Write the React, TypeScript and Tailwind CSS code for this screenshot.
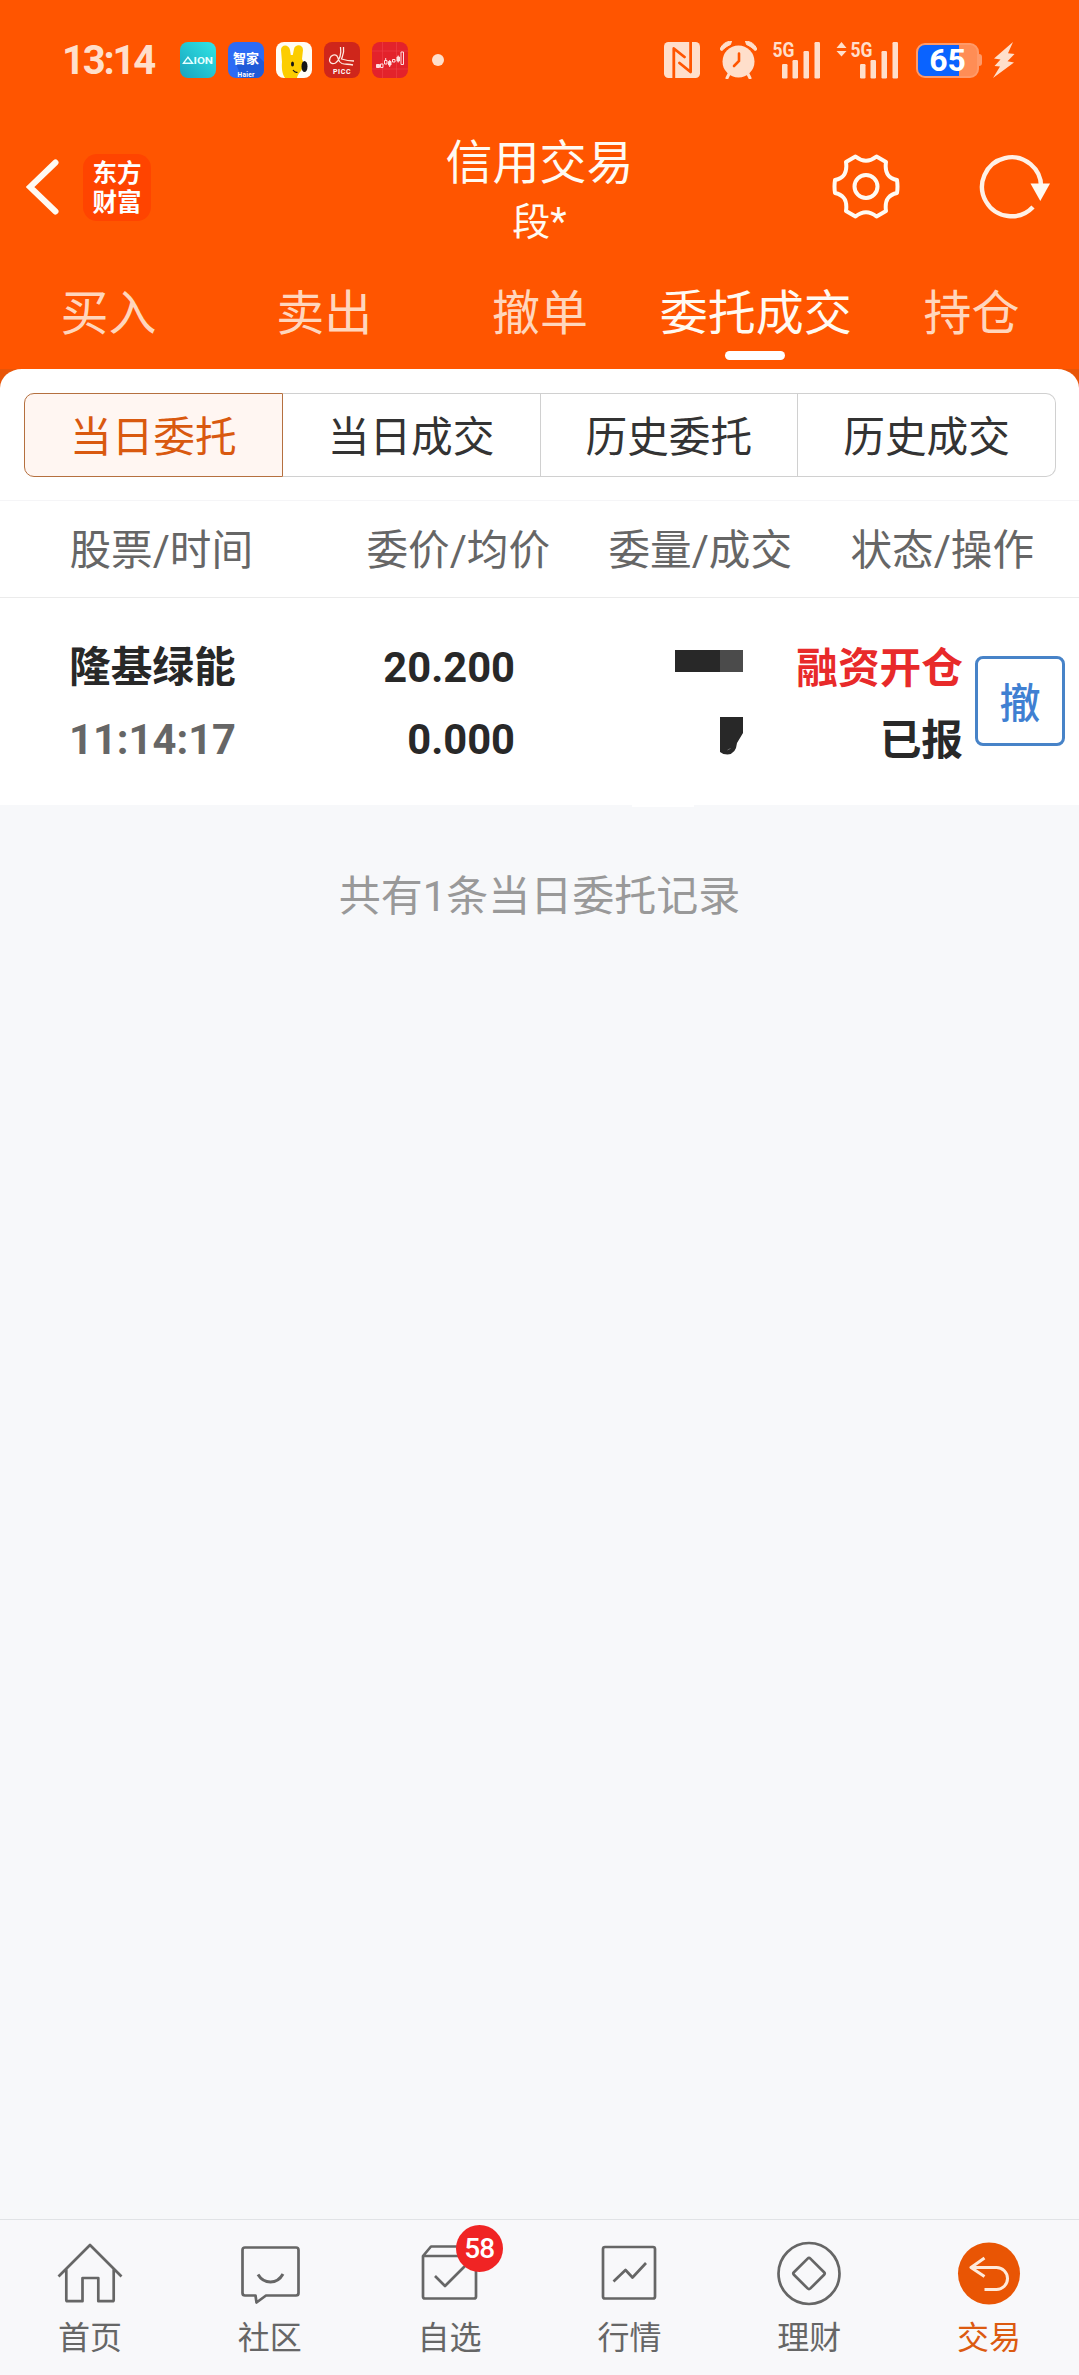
import type { ReactNode } from "react";
import clsx from "clsx";

const tabs = ["买入", "卖出", "撤单", "委托成交", "持仓"];
const segments = ["当日委托", "当日成交", "历史委托", "历史成交"];

// ─── Status bar ──────────────────────────────────────────────────────────────

function AppIcons() {
  return (
    <div className="flex gap-3">
      <svg className="size-9" viewBox="0 0 36 36">
        <defs>
          <linearGradient id="aion" x1="1" y1="0" x2="0" y2="1">
            <stop offset="0" stopColor="#2fe6e6" />
            <stop offset="1" stopColor="#1ba3bd" />
          </linearGradient>
        </defs>
        <rect width="36" height="36" rx="8" fill="url(#aion)" />
        <path d="M3.5 21.2L8 15.2l4.6 6z" fill="none" stroke="#e6ffff" strokeWidth="1.4" />
        <text x="13.5" y="21.8" fontSize="8.6" fontWeight="700" fill="#e6ffff" textLength="19.5" lengthAdjust="spacingAndGlyphs">ION</text>
      </svg>
      <svg className="size-9" viewBox="0 0 36 36">
        <rect width="36" height="36" rx="8" fill="#2c6bf5" />
        <path d="M30 14l6 6v8a8 8 0 0 1-8 8H14L8 22z" fill="#1f5ad8" />
        <text x="5" y="21" fontSize="13" fontWeight="700" fill="#fff">智家</text>
        <text x="9.5" y="34.8" fontSize="6.6" fontWeight="700" fill="#fff" textLength="17">Haier</text>
      </svg>
      <svg className="size-9" viewBox="0 0 36 36">
        <rect width="36" height="36" rx="8" fill="#fffdf6" />
        <path d="M5 8c0-6 8-6 9 0l.8 5h2L18 7c1-5 9-5 9 1l-1 9c2 4 2 7 0 10-1 3-4 4-5 9H9C6 32 5.500 25 6 20z" fill="#fccd00" />
        <ellipse cx="28.500" cy="24.500" rx="3" ry="5.500" fill="#161616" />
        <ellipse cx="16.500" cy="22" rx="1.500" ry="2.500" fill="#161616" />
        <path d="M17 28q2 3 4.500 2.200" fill="none" stroke="#161616" strokeWidth="1.200" />
      </svg>
      <svg className="size-9" viewBox="0 0 36 36">
        <rect width="36" height="36" rx="8" fill="#cf261b" />
        <g fill="none" stroke="#ffe9e0" strokeWidth="1.300">
          <path d="M16.500 5c1 7-1 13-5 16-4 2-7-1-5.500-5 1-3 5-4 7-2 2 3 1 6 5 7.500 3 1 6 .5 11 1.500" />
          <path d="M19.500 5c1 6-1 9-2 12 3 1 7 2 12.500 2" />
        </g>
        <text x="9" y="31.500" fontSize="7" fontWeight="700" fill="#fff" textLength="17.500">PICC</text>
      </svg>
      <svg className="size-9" viewBox="0 0 36 36">
        <rect width="36" height="36" rx="8" fill="#e3222b" />
        <path d="M10.500 0v36M24.500 0v36M0 9h36M0 27h36" stroke="#ee4148" strokeWidth=".6" />
        <g fill="#ffdfe0" stroke="#ffdfe0" strokeWidth="1">
          <path d="M4.500 22.500h3v3h-3zM16.500 19.500h2.500v3.500h-2.500zM25 15h2.500v4H25z" />
          <path d="M8.500 22h2.500v3.500H8.500zM12.500 18.500h2.500V22h-2.500zM20.500 17.500h2.500V20h-2.500zM29 10h2.500v12.500H29z" fill="none" />
          <path d="M13.700 16v2.500M17.700 18v7M26.200 13.500v7" />
        </g>
      </svg>
    </div>
  );
}

function Signal({ arrows = false }: Readonly<{ arrows?: boolean }>) {
  return (
    <svg className={arrows ? "ml-[15px] h-[46px] w-[63px]" : "ml-[15px] h-[46px] w-[49px]"} viewBox={arrows ? "-14 -4 63 46" : "0 -4 49 46"} fill="#ffdfcb">
      {arrows && <path d="M-13.500 7L-8.500 1l5 6zM-13.500 10L-8.500 15.500l5-5.500z" />}
      <text x="0.500" y="16" fontSize="21" fontWeight="700" textLength="22" lengthAdjust="spacingAndGlyphs">5G</text>
      <rect x="10" y="23" width="5.500" height="14.500" rx="1.200" />
      <rect x="20.500" y="19" width="5.500" height="18.500" rx="1.200" />
      <rect x="31.500" y="10" width="5.500" height="27.500" rx="1.200" />
      <rect x="42.500" y="1" width="5.500" height="36.500" rx="1.200" />
    </svg>
  );
}

function StatusBar() {
  return (
    <div className="flex h-[120px] items-center pl-[62px]">
      <span className="w-[118px] pt-px text-[40px] leading-none font-bold tracking-[-2.2px] text-[#ffdfcb]">13:14</span>
      <AppIcons />
      <span className="ml-6 size-3 rounded-full bg-[#ffdfcb]" />
      <div className="ml-[220px] flex items-center">
        <svg className="h-[38px] w-9" viewBox="0 0 36 38">
          <rect y="1" width="36" height="36" rx="4.500" fill="#ffdfcb" />
          <path d="M9.800 37V7.500L20.500 16M26.600 1v30L15.500 22" fill="none" stroke="#ff5500" strokeWidth="2.800" strokeLinejoin="round" strokeLinecap="round" />
        </svg>
        <svg className="ml-5 h-[38px] w-[37px]" viewBox="0 0 37 38" fill="#ffdfcb">
          <circle cx="18.500" cy="20.500" r="16" />
          <path d="M0 8.500C2 3 6 .5 11.500 0l-1 3.500C7 5 4.500 7 2 9.500zM37 8.500C35 3 31 .5 25.500 0l1 3.500C30 5 32.500 7 35 9.500z" stroke="#ffdfcb" strokeLinejoin="round" />
          <path d="M9.500 32L7 37M27.500 32l2.500 5" stroke="#ffdfcb" strokeWidth="3" strokeLinecap="round" />
          <path d="M19 12.500V20l-5 5" fill="none" stroke="#ff5500" strokeWidth="2.600" strokeLinecap="round" />
        </svg>
        <Signal />
        <Signal arrows />
        <div className="relative ml-[17px] flex h-[35px] w-[63px] items-center justify-center rounded-[9px] border-2 border-[#ff9a69] bg-[#ff8d55]">
          <div className="absolute inset-y-0 left-0 w-[41px] rounded-l-[7px] bg-[#0a63ff]" />
          <span className="relative text-[32px] leading-none font-bold text-white">65</span>
        </div>
        <div className="h-3 w-[3px] rounded-r-sm bg-[#ff9a69]" />
        <svg className="ml-[11px] h-9 w-[22px]" viewBox="0 0 22 36" fill="#ffdfcb">
          <path d="M20 0L1 16.500l6.500 1L1.500 24l5.500.5L0 36l21-15.500-6.500-1.200L21.500 12l-6.500-.8z" />
        </svg>
      </div>
    </div>
  );
}

// ─── Title bar ───────────────────────────────────────────────────────────────

function TitleBar() {
  return (
    <div className="flex h-[150px] items-start text-[#fffaf2]">
      <div className="flex w-[360px] pl-[26px] pt-[34px]">
        <svg className="mt-[5px] h-[56px] w-[34px]" viewBox="0 0 34 56" fill="none" stroke="#fffaf2" strokeWidth="6" strokeLinecap="round">
          <path d="M29.500 3.500L4 28l25.500 24.500" />
        </svg>
        <div className="ml-[23px] flex h-[67px] w-[68px] flex-col items-center justify-center rounded-[14px] bg-[#ff4400] text-[24.5px] leading-[29px] font-bold text-white">
          <span>东方</span>
          <span>财富</span>
        </div>
      </div>
      <div className="flex w-[359px] flex-col items-center pt-[14px]">
        <h1 className="text-[47px] leading-[58px]">信用交易</h1>
        <p className="text-[38px] leading-[60px]">段*</p>
      </div>
      <div className="flex flex-1 pt-[33px] pl-[113px]">
        <svg className="h-[67px] w-[68px]" viewBox="-34 -33.500 68 67" fill="none" stroke="#fffaf2" strokeWidth="4" strokeLinejoin="round">
          <path d="M-10.500 -30Q0 -21.500 10.500 -30L20 -24.500C18.500 -14 22 -8.500 31 -6.500Q32 0 31 6.500C22 8.500 18.500 14 20 24.500L10.500 30Q0 21.500 -10.500 30L-20 24.500C-18.500 14 -22 8.500 -31 6.500Q-32 0 -31 -6.500C-22 -8.500 -18.500 -14 -20 -24.500Z" />
          <circle r="11.500" />
        </svg>
        <svg className="ml-[78px] h-[67px] w-[76px]" viewBox="-34 -33.500 76 67">
          <path d="M29 2A29.500 29.500 0 1 0 21 20.500" fill="none" stroke="#fff1e6" strokeWidth="4.400" />
          <path d="M18.500 -3h19.500l-9.700 17.500z" fill="#fffaf2" />
        </svg>
      </div>
    </div>
  );
}

function TabBar() {
  return (
    <div className="flex h-[99px]">
      {tabs.map((tab) => {
        const active = tab === "委托成交";
        return (
          <button
            key={tab}
            type="button"
            className={clsx(
              "flex flex-1 flex-col items-center pt-[5px] text-[48px] leading-[76px] whitespace-nowrap",
              active ? "text-[#fffaf2]" : "text-[#ffd6bd]"
            )}
          >
            <span className="h-[76px] pt-px pl-px">{tab}</span>
            {active && <span className="h-[9px] w-[60px] rounded-full bg-white" />}
          </button>
        );
      })}
    </div>
  );
}

// ─── Orders ──────────────────────────────────────────────────────────────────

function Segments() {
  return (
    <div className="px-6 pt-6 pb-[23px]">
      <div className="flex h-[84px] w-[1032px]">
        {segments.map((label, i) => (
          <button
            key={label}
            type="button"
            className={clsx(
              "flex flex-1 items-center justify-center border pt-1.5 text-[41.7px] leading-none",
              i === 0 && "rounded-l-[10px] border-[#b5703f] bg-[#fff6f2] text-[#d9590f]",
              i > 0 && "border-l-0 border-[#d0d0d0] text-[#333]",
              i === segments.length - 1 && "rounded-r-[10px]"
            )}
          >
            {label}
          </button>
        ))}
      </div>
    </div>
  );
}

function OrderTable() {
  return (
    <div>
      <div className="flex h-[98px] items-center border-y border-t-[#f5f5f7] border-b-[#ebebeb] pt-[5px] pl-[69.5px] text-[41.6px] text-[#666]">
        <span className="w-[297px]">股票/时间</span>
        <span className="w-[242px]">委价/均价</span>
        <span className="w-[242px]">委量/成交</span>
        <span>状态/操作</span>
      </div>
      <div className="flex h-[207px] pt-[34px] pl-[69px] text-[41.7px] leading-[72px] font-bold text-[#282828]">
        <div className="flex w-[200px] flex-col">
          <span>隆基绿能</span>
          <span className="text-[#666]">11:14:17</span>
        </div>
        <div className="flex w-[246px] flex-col items-end">
          <span>20.200</span>
          <span>0.000</span>
        </div>
        {/* masked quantities */}
        <div className="flex w-[228px] flex-col items-end pt-[18px]">
          <div className="flex h-[22px]">
            <span className="w-[45px] bg-[#282828]" />
            <span className="w-[23px] bg-[#4b4b4b]" />
          </div>
          <svg className="mt-[45px] h-[38px] w-[23px]" viewBox="0 0 23 38">
            <path d="M0 0h23v16l-6 10q-1 11-9.500 11.500Q3 37.500 0 35z" fill="#282828" />
            <path d="M7.500 33l3-1.500" stroke="#777" strokeWidth=".8" />
          </svg>
        </div>
        <div className="flex w-[220px] flex-col items-end pt-px">
          <span className="text-[#e82a2a]">融资开仓</span>
          <span>已报</span>
        </div>
        <button
          type="button"
          className="mt-6 ml-3 flex size-[90px] items-center justify-center rounded-lg border-[3px] border-[#4783c8] pt-[6px] text-[41px] leading-none font-medium text-[#3f80d2]"
        >
          撤
        </button>
      </div>
      <div className="bg-[#f7f8fa]">
        <div className="ml-[632px] h-0.5 w-[62px] bg-white" />
      </div>
    </div>
  );
}

// ─── Bottom navigation ───────────────────────────────────────────────────────

const navItems: { label: string; icon: ReactNode; badge?: number; active?: boolean }[] = [
  {
    label: "首页",
    icon: <path d="M2.500 36.500L34 5l31.500 31.500M10.300 29.500V60q0 1.200 1.200 1.200h15V38h15.800v23.200H56.500q1.200 0 1.200-1.200V29.500" />,
  },
  {
    label: "社区",
    icon: (
      <>
        <path d="M9 7.500h51q2.500 0 2.500 2.500v43q0 2.500-2.500 2.500H30l-9.500 7-1-7H9q-2.500 0-2.500-2.500V10q0-2.500 2.500-2.500z" />
        <path d="M22 34.500q4.500 7.500 12.500 7.500T47 34" strokeWidth="3" />
      </>
    ),
  },
  {
    label: "自选",
    badge: 58,
    icon: (
      <>
        <path d="M7 16l8-9.500h37l8 9.500v40.500q0 2-2 2H9q-2 0-2-2zM7 16h53" />
        <path d="M19 36l10 10 21-21" />
      </>
    ),
  },
  {
    label: "行情",
    icon: (
      <>
        <rect x="8" y="7" width="52" height="51.500" rx="2" />
        <path d="M18.500 41.500L30.500 30l7 7.500L51 23" />
      </>
    ),
  },
  {
    label: "理财",
    icon: (
      <>
        <circle cx="34" cy="33.500" r="30.500" />
        <path d="M32.600 18.600q1.400-1.400 2.800 0l13.700 13.700q1.200 1.200 0 2.400L35.400 48.400q-1.400 1.400-2.800 0L18.900 34.700q-1.200-1.200 0-2.400z" />
      </>
    ),
  },
  {
    label: "交易",
    active: true,
    icon: (
      <>
        <circle cx="34" cy="33.500" r="31" fill="#e95504" stroke="none" />
        <path d="M29.500 18L16 27.500l13.500 9M16 27.500h25.500a11 11 0 0 1 0 22H29.500" stroke="#ffeadb" strokeWidth="3" />
      </>
    ),
  },
];

function BottomNav() {
  return (
    <nav className="flex h-[156px] border-t border-[#e1e3e6] bg-[#f8f8fa]">
      {navItems.map(({ label, icon, badge, active }) => (
        <button
          key={label}
          type="button"
          className={clsx(
            "relative flex flex-1 flex-col items-center pt-5 text-[32px] leading-[60px]",
            active ? "text-[#dc5a10]" : "text-[#666]"
          )}
        >
          <svg className="h-[68px] w-[68px]" viewBox="0 0 68 68" fill="none" stroke="#666" strokeWidth="2.700" strokeLinejoin="round">
            {icon}
          </svg>
          <span>{label}</span>
          {badge && (
            <span className="absolute top-[5px] left-[96px] flex size-[47px] items-center justify-center rounded-full bg-[#f02424] pt-px text-[28px] leading-none font-medium tracking-[-1px] text-white">
              {badge}
            </span>
          )}
        </button>
      ))}
    </nav>
  );
}

export default function App() {
  return (
    <div className="flex h-[2375px] w-[1079px] flex-col bg-[#f7f8fa] font-['Roboto','Noto_Sans_CJK_SC',sans-serif]">
      <header className="bg-[#ff5500]">
        <StatusBar />
        <TitleBar />
        <TabBar />
      </header>
      <main className="flex-1">
        <div className="bg-[#e85508]">
          <div className="rounded-tl-[22px_19px] rounded-tr-[22px_19px] bg-white">
            <Segments />
            <OrderTable />
          </div>
        </div>
        <p className="pt-[60px] text-center text-[42px] leading-[60px] text-[#999]">共有1条当日委托记录</p>
      </main>
      <BottomNav />
    </div>
  );
}
